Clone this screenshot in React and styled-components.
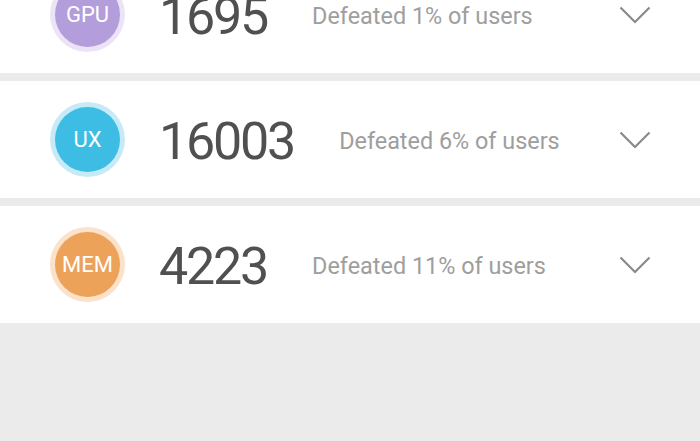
import React from "react";
import styled, { createGlobalStyle } from "styled-components";

const Global = createGlobalStyle`
  html, body { margin: 0; padding: 0; background: #ebebeb; }
  body { font-family: Roboto, "Noto Sans", sans-serif; overflow: hidden; }
`;

const Page = styled.div`
  width: 700px;
  height: 441px;
  background: #ebebeb;
  overflow: hidden;
`;

const List = styled.div`
  display: flex;
  flex-direction: column;
  gap: 8px;
  margin-top: -44px;
`;

const Card = styled.div`
  height: 117px;
  background: #ffffff;
  display: flex;
  align-items: center;
  padding-left: 50px;
  box-sizing: border-box;
`;

const Badge = styled.div`
  width: 65px;
  height: 65px;
  border-radius: 50%;
  background: ${(p) => p.$color};
  box-shadow: 0 0 0 5px ${(p) => p.$ring};
  display: flex;
  align-items: center;
  justify-content: center;
  color: #ffffff;
  font-size: 22px;
  margin-left: 5px;
  flex-shrink: 0;
`;

const Score = styled.div`
  margin-left: 39px;
  padding-top: 4px;
  font-size: 52px;
  letter-spacing: -2.2px;
  color: #505050;
  line-height: 1;
`;

const Note = styled.div`
  margin-left: 45px;
  padding-top: 2px;
  font-size: 23.4px;
  color: #9e9e9e;
  flex: 1;
`;

const Chevron = styled.svg`
  width: 32px;
  height: 18px;
  margin-right: 49px;
  flex-shrink: 0;
`;

const rows = [
  { label: "GPU", color: "#b39ddb", ring: "#ebe4f6", score: "1695", pct: "1%" },
  { label: "UX", color: "#3ebde4", ring: "#c6eaf6", score: "16003", pct: "6%" },
  { label: "MEM", color: "#eda25a", ring: "#fae2cb", score: "4223", pct: "11%" },
];

export default function App() {
  return (
    <Page>
      <Global />
      <List>
        {rows.map((r) => (
          <Card key={r.label}>
            <Badge $color={r.color} $ring={r.ring}>{r.label}</Badge>
            <Score>{r.score}</Score>
            <Note>Defeated {r.pct} of users</Note>
            <Chevron viewBox="0 0 32 18">
              <polyline points="1.5,1.5 16,16 30.5,1.5" fill="none" stroke="#8a8a8a" strokeWidth="2.2" />
            </Chevron>
          </Card>
        ))}
      </List>
    </Page>
  );
}
